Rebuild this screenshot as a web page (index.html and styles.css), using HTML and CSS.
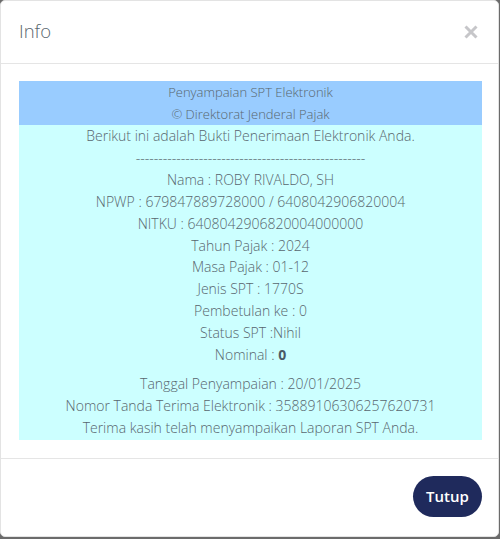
FILE: index.html
```html
<!DOCTYPE html>
<html lang="id">
<head>
<meta charset="utf-8">
<title>Info</title>
<link rel="stylesheet" href="styles.css">
</head>
<body>
<div class="modal">
  <div class="modal-header">
    <h4 class="modal-title">Info</h4>
    <svg class="close" width="14" height="14" viewBox="0 0 14 14" aria-label="close">
      <path d="M1.5 1.5 L12.5 12.5 M12.5 1.5 L1.5 12.5" stroke="#c6c6c9" stroke-width="3" stroke-linecap="butt"/>
    </svg>
  </div>
  <div class="modal-body">
    <div class="receipt">
      <div class="receipt-head">
        <div>Penyampaian SPT Elektronik</div>
        <div>&copy; Direktorat Jenderal Pajak</div>
      </div>
      <div class="receipt-body">
        <div>Berikut ini adalah Bukti Penerimaan Elektronik Anda.</div>
        <div class="dash">---------------------------------------------------</div>
        <div>Nama : ROBY RIVALDO, SH</div>
        <div>NPWP : 679847889728000 / 6408042906820004</div>
        <div>NITKU : 6408042906820004000000</div>
        <div>Tahun Pajak : 2024</div>
        <div>Masa Pajak : 01-12</div>
        <div>Jenis SPT : 1770S</div>
        <div>Pembetulan ke : 0</div>
        <div>Status SPT :Nihil</div>
        <div>Nominal : <b>0</b></div>
        <div class="gap">Tanggal Penyampaian : 20/01/2025</div>
        <div>Nomor Tanda Terima Elektronik : 35889106306257620731</div>
        <div>Terima kasih telah menyampaikan Laporan SPT Anda.</div>
      </div>
    </div>
  </div>
  <div class="modal-footer">
    <button class="btn">Tutup</button>
  </div>
</div>
</body>
</html>
```

FILE: styles.css
```css
html, body {
  margin: 0;
  padding: 0;
}
body {
  background: #6b6b6b;
  font-family: "Open Sans", "Noto Sans", sans-serif;
  font-weight: 300;
  color: #58666e;
  height: 539px;
}
.modal {
  width: 497px;
  height: 535px;
  background: #fff;
  border: 1px solid #e3e3e3;
  border-radius: 5px;
  display: flex;
  flex-direction: column;
}
.modal-header {
  display: flex;
  justify-content: space-between;
  align-items: center;
  padding: 20px 20px 22px 18px;
  border-bottom: 1px solid #e5e5e5;
  height: 20px;
}
.modal-title {
  margin: 0;
  font-size: 18.5px;
  font-weight: 300;
  line-height: 20px;
  color: #58666e;
}
.close {
  display: block;
  margin-top: 2px;
}
.modal-body {
  padding: 17px 16px 18px 18px;
}
.receipt {
  text-align: center;
}
.receipt-head {
  background: #99ccff;
  font-size: 13px;
  line-height: 22px;
}
.receipt-body {
  background: #ccffff;
  font-size: 14px;
  line-height: 21.9px;
  padding-bottom: 1px;
}
.receipt-body b {
  font-weight: 700;
  color: #4a5a66;
}
.gap {
  margin-top: 7px;
}
.modal-footer {
  border-top: 1px solid #e5e5e5;
  padding: 17px 16px 18px;
  display: flex;
  justify-content: flex-end;
}
.btn {
  font-family: "Open Sans", "Noto Sans", sans-serif;
  font-size: 15px;
  font-weight: 600;
  color: #fff;
  background: #1f2a5c;
  border: none;
  border-radius: 21px;
  width: 69px;
  height: 41px;
  padding: 0;
}
```
